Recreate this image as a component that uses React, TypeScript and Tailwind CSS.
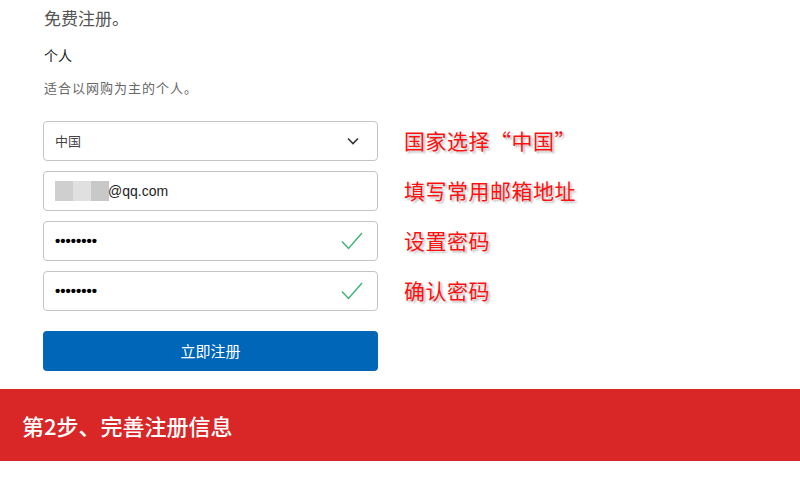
import React from "react";

const cjk = "font-['Noto_Sans_CJK_SC',sans-serif]";

const Check: React.FC = () => (
  <svg width="22" height="20" viewBox="0 0 22 20" fill="none">
    <path d="M1 10.5 L7.5 17.5 L21 2" stroke="#3cb371" strokeWidth="1.4" />
  </svg>
);

const Field: React.FC<{ children: React.ReactNode }> = ({ children }) => (
  <div className="h-10 w-[335px] rounded-[4px] border border-[#c4c4c4] bg-white flex items-center px-[11px]">
    {children}
  </div>
);

const Label: React.FC<{ text: string }> = ({ text }) => (
  <div className="h-10 flex items-center text-[21px] tracking-[0.5px] text-[#ff1010] [text-shadow:2px_2px_2px_rgba(0,0,0,0.25)]">
    {text}
  </div>
);

const App: React.FC = () => {
  const dots = "••••••••";
  return (
    <div className={`w-[800px] h-[481px] bg-white overflow-hidden ${cjk}`}>
      <div className="pl-[44px] pt-[6px]">
        <h1 className="text-[17px] leading-6 text-[#555]">免费注册。</h1>
        <p className="mt-[15px] text-[14px] leading-5 text-[#222]">个人</p>
        <p className="mt-[13px] text-[13px] tracking-[1px] leading-5 text-[#666]">适合以网购为主的个人。</p>
      </div>

      <div className="flex mt-[23px] pl-[43px] gap-[26px]">
        <div className="flex flex-col gap-[10px]">
          <Field>
            <span className="text-[13px] text-[#444]">中国</span>
            <svg className="ml-auto mr-[7px]" width="12" height="8" viewBox="0 0 12 8" fill="none">
              <path d="M1 1.5 L6 6.5 L11 1.5" stroke="#333" strokeWidth="1.6" />
            </svg>
          </Field>
          <Field>
            <div className="flex h-5">
              <div className="w-[18px] bg-[#cfcfcf]" />
              <div className="w-[18px] bg-[#e0e0e0]" />
              <div className="w-[18px] bg-[#c8c8c8]" />
            </div>
            <span className="font-['Liberation_Sans',sans-serif] text-[14px] text-[#222] -ml-[1px]">@qq.com</span>
          </Field>
          <Field>
            <span className="font-['Liberation_Sans',sans-serif] font-bold text-[15px] text-black">{dots}</span>
            <span className="ml-auto mr-[3px]"><Check /></span>
          </Field>
          <Field>
            <span className="font-['Liberation_Sans',sans-serif] font-bold text-[15px] text-black">{dots}</span>
            <span className="ml-auto mr-[3px]"><Check /></span>
          </Field>
          <button className="mt-[10px] h-10 w-[335px] rounded-[4px] bg-[#0067b8] text-white text-[15px]">
            立即注册
          </button>
        </div>
        <div className="flex flex-col gap-[10px]">
          <Label text="国家选择“中国”" />
          <Label text="填写常用邮箱地址" />
          <Label text="设置密码" />
          <Label text="确认密码" />
        </div>
      </div>

      <div className="mt-[18px] h-[72px] bg-[#d92626] flex items-center pl-[22px]">
        <span className="text-white text-[22px] font-medium">第2步、完善注册信息</span>
      </div>
    </div>
  );
};

export default App;
